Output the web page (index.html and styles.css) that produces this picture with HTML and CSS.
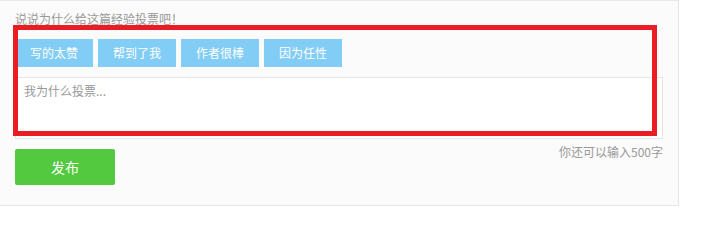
FILE: index.html
```html
<!DOCTYPE html>
<html lang="zh-CN">
<head>
    <meta charset="UTF-8">
    <title>经验投票</title>
    <link rel="stylesheet" href="styles.css">
</head>
<body>
    <section class="vote-panel">
        <p class="vote-title">说说为什么给这篇经验投票吧！</p>
        <div class="vote-tags">
            <a href="#" class="tag">写的太赞</a>
            <a href="#" class="tag">帮到了我</a>
            <a href="#" class="tag">作者很棒</a>
            <a href="#" class="tag">因为任性</a>
        </div>
        <textarea class="vote-input" placeholder="我为什么投票..."></textarea>
        <div class="vote-footer">
            <button class="btn-publish">发布</button>
            <span class="vote-count">你还可以输入500字</span>
        </div>
        <div class="highlight"></div>
    </section>
</body>
</html>
```

FILE: styles.css
```css
body { margin: 0; background: #fff; font-family: "Noto Sans CJK SC", "Liberation Sans", sans-serif; }
.vote-panel { position: relative; width: 663px; padding: 10px 0 20px 15px; background: #fbfbfb; border: 1px solid #e6e6e6; border-left: none; border-top-color: #e8e8e8; }
.vote-title { margin: 0; font-size: 12px; line-height: 16px; color: #999; }
.vote-tags { display: flex; gap: 5px; margin-top: 12px; }
.tag { width: 78px; height: 28px; line-height: 28px; text-align: center; background: #82cdf5; color: #fff; font-size: 12px; text-decoration: none; }
.vote-input { display: block; box-sizing: border-box; width: 648px; height: 62px; margin-top: 10px; padding: 4px 8px; border: 1px solid #e5e5e5; background: #fff; resize: none; outline: none; font-family: inherit; font-size: 12px; line-height: 18px; color: #666; }
.vote-input::placeholder { color: #999; }
.vote-footer { display: flex; justify-content: space-between; align-items: flex-start; width: 648px; margin-top: 5px; }
.btn-publish { width: 100px; height: 36px; margin-top: 5px; border: none; border-radius: 2px; background: #52c93f; color: #fff; font-family: inherit; font-size: 14px; cursor: pointer; }
.vote-count { font-size: 12px; line-height: 16px; color: #999; }
.highlight { position: absolute; left: 13px; top: 24px; width: 634px; height: 101px; border: 5px solid #ea1c24; pointer-events: none; }
```
